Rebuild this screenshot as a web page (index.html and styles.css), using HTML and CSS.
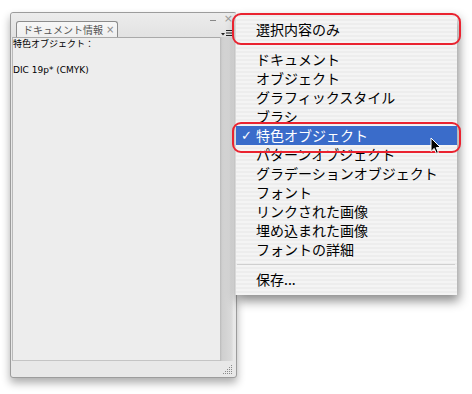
FILE: index.html
```html
<!DOCTYPE html>
<html lang="ja">
<head>
<meta charset="utf-8">
<link rel="stylesheet" href="styles.css">
</head>
<body>
<div class="stage">
  <div class="panel">
    <div class="panel-head">
      <div class="tab"><span class="tab-label">ドキュメント情報</span><span class="tab-close">×</span></div>
      <div class="win-ctrls"><span class="ctl-min"></span><span class="ctl-close">×</span></div>
      <div class="menu-btn">
        <svg width="11" height="8" viewBox="0 0 11 8"><path d="M0 4h4l-2 2.5z" fill="#222"/><path d="M5 1.5h6M5 4h6M5 6.5h6" stroke="#222" stroke-width="1"/></svg>
      </div>
    </div>
    <div class="panel-body">
      <div class="content">
        <div class="line">特色オブジェクト：</div>
        <div class="line">&nbsp;</div>
        <div class="line">DIC 19p* (CMYK)</div>
      </div>
      <div class="scrollbar"></div>
    </div>
    <div class="panel-foot">
      <svg class="grip" width="10" height="10" viewBox="0 0 10 10">
        <g fill="#8a8a8a">
          <rect x="8" y="0" width="1" height="1"/>
          <rect x="6" y="2" width="1" height="1"/><rect x="8" y="2" width="1" height="1"/>
          <rect x="4" y="4" width="1" height="1"/><rect x="6" y="4" width="1" height="1"/><rect x="8" y="4" width="1" height="1"/>
          <rect x="2" y="6" width="1" height="1"/><rect x="4" y="6" width="1" height="1"/><rect x="6" y="6" width="1" height="1"/><rect x="8" y="6" width="1" height="1"/>
          <rect x="0" y="8" width="1" height="1"/><rect x="2" y="8" width="1" height="1"/><rect x="4" y="8" width="1" height="1"/><rect x="6" y="8" width="1" height="1"/><rect x="8" y="8" width="1" height="1"/>
        </g>
      </svg>
    </div>
  </div>

  <div class="menu">
    <div class="item">選択内容のみ</div>
    <div class="sep"></div>
    <div class="item">ドキュメント</div>
    <div class="item">オブジェクト</div>
    <div class="item">グラフィックスタイル</div>
    <div class="item">ブラシ</div>
    <div class="item selected"><span class="check">✓</span>特色オブジェクト</div>
    <div class="item">パターンオブジェクト</div>
    <div class="item">グラデーションオブジェクト</div>
    <div class="item">フォント</div>
    <div class="item">リンクされた画像</div>
    <div class="item">埋め込まれた画像</div>
    <div class="item">フォントの詳細</div>
    <div class="sep"></div>
    <div class="item">保存...</div>
  </div>

  <div class="mark mark-top"></div>
  <div class="mark mark-sel"></div>

  <svg class="cursor" width="12" height="18" viewBox="0 0 12 18">
    <path d="M1 1 L1 14.5 L4.2 11.4 L6.4 16.4 L8.4 15.5 L6.3 10.6 L10.6 10.6 Z" fill="#000" stroke="#fff" stroke-width="1" stroke-linejoin="round"/>
  </svg>
</div>
</body>
</html>
```

FILE: styles.css
```css
html, body {
  margin: 0;
  padding: 0;
  background: #ffffff;
}

.stage {
  position: relative;
  width: 472px;
  height: 394px;
  overflow: hidden;
  padding: 12px 0 0 10px;
  box-sizing: border-box;
  font-family: "DejaVu Sans", "Noto Sans CJK JP", sans-serif;
}

/* ---------- panel ---------- */
.panel {
  width: 227px;
  height: 366px;
  box-sizing: border-box;
  border: 1px solid #9c9c9c;
  border-radius: 3px;
  background: #e8e8e8;
  box-shadow: 0 5px 9px rgba(0, 0, 0, 0.32);
  display: flex;
  flex-direction: column;
}

.panel-head {
  position: relative;
  height: 24px;
  flex: none;
  background: linear-gradient(#ececec, #e2e2e2);
  border-radius: 3px 3px 0 0;
  padding: 8px 0 0 5px;
  box-sizing: border-box;
  display: flex;
  align-items: flex-end;
}

.tab {
  flex: none;
  width: 102px;
  height: 16px;
  box-sizing: border-box;
  border: 1px solid #8c8c8c;
  border-bottom: none;
  border-radius: 3px 3px 0 0;
  background: linear-gradient(#f7f7f7, #efefef);
  display: flex;
  align-items: center;
  padding-left: 6px;
  font-family: "Noto Sans CJK JP", sans-serif;
  font-size: 10px;
  line-height: 14px;
  color: #555;
  white-space: nowrap;
  overflow: hidden;
}

.tab-label {
  flex: none;
}

.tab-close {
  flex: none;
  margin-left: 3px;
  font-family: "DejaVu Sans", sans-serif;
  font-size: 10px;
  color: #888;
}

.win-ctrls {
  position: absolute;
  right: 3px;
  top: 0;
  display: flex;
  align-items: center;
  gap: 8px;
}

.ctl-min {
  width: 6px;
  height: 1px;
  background: #888;
  margin-top: 4px;
}

.ctl-close {
  font-size: 11px;
  line-height: 11px;
  color: #999;
}

.menu-btn {
  position: absolute;
  right: 4px;
  top: 16px;
  width: 11px;
  height: 8px;
  line-height: 0;
}

.panel-body {
  flex: 1;
  display: flex;
  padding: 0 3px 0 1px;
}

.content {
  flex: 1;
  background: #ededed;
  border-top: 1px solid #a9a9a9;
  border-left: 1px solid #b9b9b9;
  border-bottom: 1px solid #c4c4c4;
  font-size: 9px;
  line-height: 13px;
  color: #000;
}

.line {
  height: 13px;
  white-space: nowrap;
}

.scrollbar {
  width: 13px;
  flex: none;
  background: linear-gradient(90deg, #b9b9b9 0, #cfcfcf 2px, #d6d6d6 8px, #d9d9d9 11px, #e3e3e3 13px);
}

.panel-foot {
  height: 16px;
  flex: none;
  display: flex;
  justify-content: flex-end;
  align-items: flex-end;
  padding: 0 3px 2px 0;
  box-sizing: border-box;
}

/* ---------- menu ---------- */
.menu {
  position: absolute;
  left: 235px;
  top: 13px;
  width: 222px;
  height: 282px;
  box-sizing: border-box;
  padding-top: 7px;
  background: repeating-linear-gradient(#f4f4f4 0 2px, #ededed 2px 4px);
  border-left: 1px solid #d9d9d9;
  box-shadow: 2px 6px 10px rgba(0, 0, 0, 0.45);
  font-family: "Noto Sans CJK JP", sans-serif;
  font-size: 14px;
  color: #000;
}

.item {
  position: relative;
  height: 19px;
  line-height: 19px;
  padding-left: 20px;
  white-space: nowrap;
}

.item.selected {
  background: #3a6cca;
  color: #ffffff;
}

.check {
  position: absolute;
  left: 5px;
  top: 0;
  font-family: "DejaVu Sans", sans-serif;
  font-size: 13px;
  font-weight: bold;
}

.sep {
  height: 11px;
  position: relative;
}

.sep::after {
  content: "";
  position: absolute;
  left: 1px;
  right: 2px;
  top: 5px;
  height: 1px;
  background: #cfcfcf;
}

/* ---------- annotations ---------- */
.mark {
  position: absolute;
  box-sizing: border-box;
  border: 2px solid #ea2330;
  border-radius: 9px;
  left: 232px;
  width: 229px;
}

.mark-top {
  top: 13px;
  height: 32px;
}

.mark-sel {
  top: 122px;
  height: 31px;
}

.cursor {
  position: absolute;
  left: 430px;
  top: 137px;
}
```
